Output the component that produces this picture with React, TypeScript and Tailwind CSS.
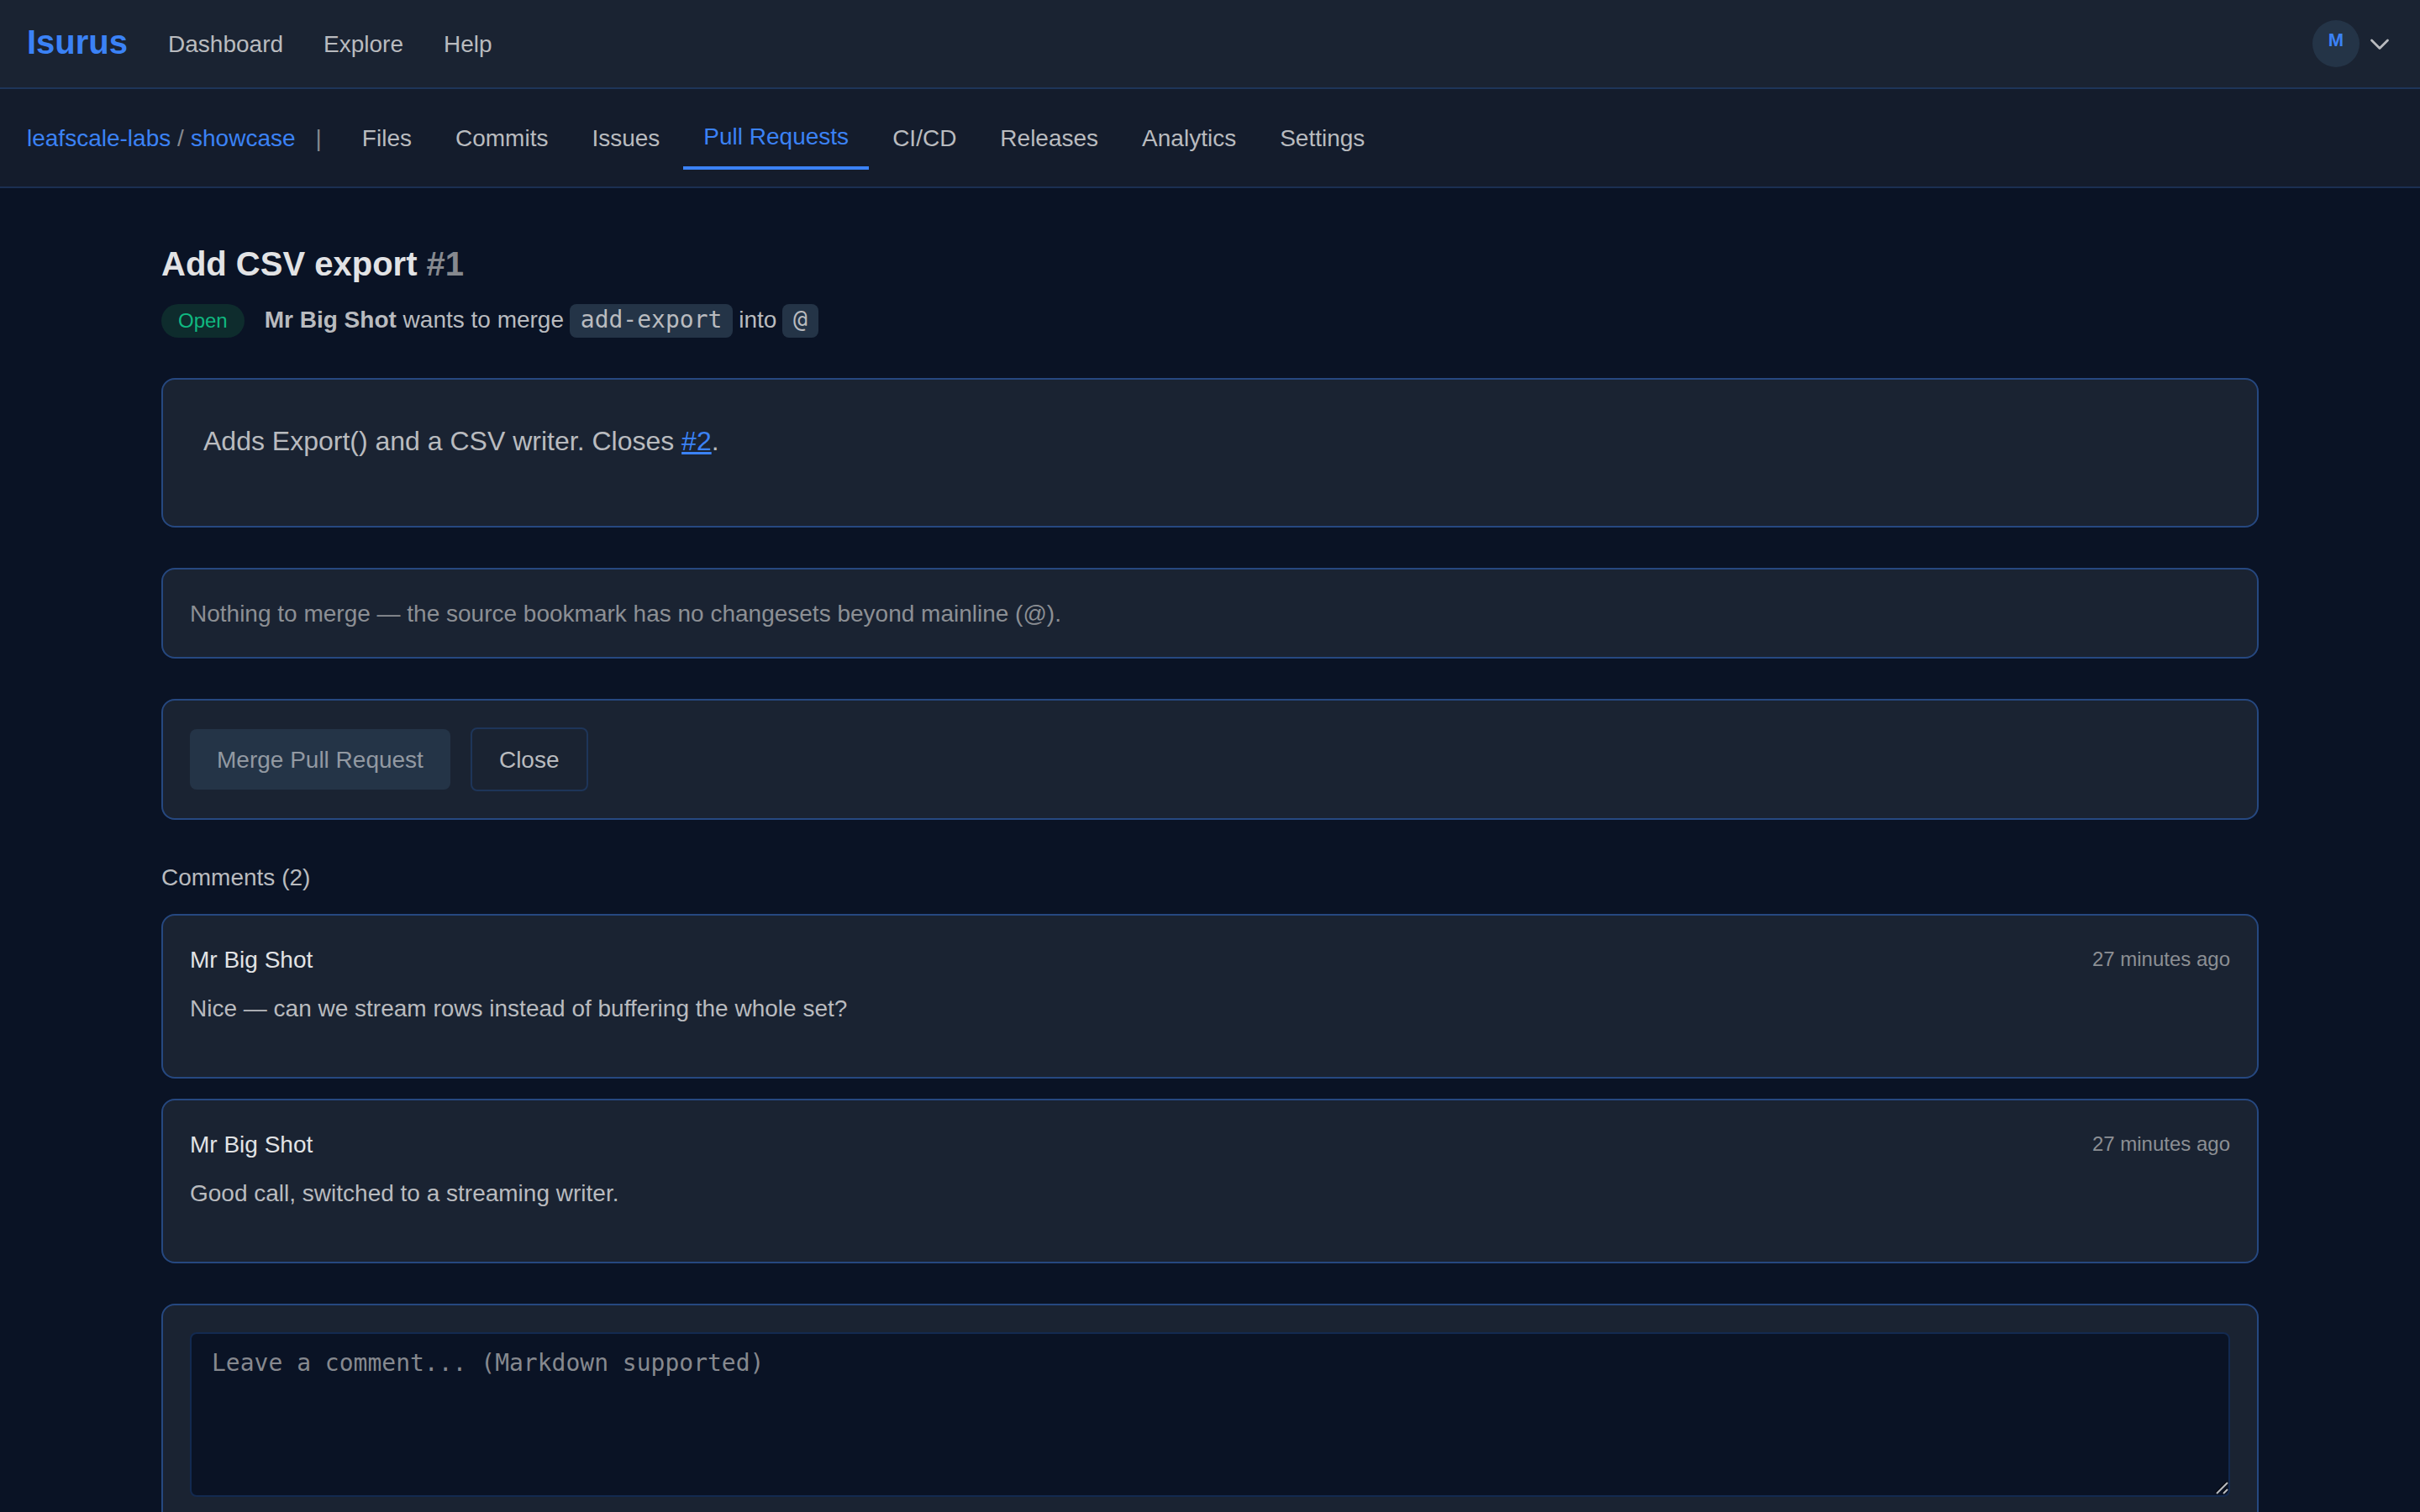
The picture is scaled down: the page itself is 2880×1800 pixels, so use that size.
import { useState } from "react";

const NAV_LINKS = [
  { label: "Dashboard", href: "#dashboard" },
  { label: "Explore", href: "#explore" },
  { label: "Help", href: "#help" },
];

const REPO_TABS = [
  "Files",
  "Commits",
  "Issues",
  "Pull Requests",
  "CI/CD",
  "Releases",
  "Analytics",
  "Settings",
];

const COMMENTS = [
  {
    id: 1,
    author: "Mr Big Shot",
    time: "27 minutes ago",
    body: "Nice — can we stream rows instead of buffering the whole set?",
  },
  {
    id: 2,
    author: "Mr Big Shot",
    time: "27 minutes ago",
    body: "Good call, switched to a streaming writer.",
  },
];

function TopBar() {
  return (
    <header className="flex h-[106px] items-center justify-between border-b-2 border-[#1e3559] bg-[#1a2332] pr-9 pl-8">
      <div className="flex items-center">
        <a href="#home" className="mr-12 pb-[5px] text-[40px] leading-[48px] font-bold text-[#3b82f6]">
          Isurus
        </a>
        <nav className="flex items-center gap-12 pt-0.5" aria-label="Main navigation">
          {NAV_LINKS.map((link) => (
            <a key={link.label} href={link.href} className="text-[#b9bbbf]">
              {link.label}
            </a>
          ))}
        </nav>
      </div>
      <button className="flex items-center gap-3" aria-label="User menu">
        <span className="flex size-14 justify-center rounded-full bg-[#243447] pt-[10px] text-[22px] leading-[28px] font-bold text-[#3b82f6]">
          M
        </span>
        <svg width="24" height="24" viewBox="0 0 24 24" fill="none">
          <path
            d="M2.5 8L12 17.5L21.5 8"
            stroke="#b9bbbf"
            strokeWidth="2.8"
            strokeLinecap="round"
            strokeLinejoin="round"
          />
        </svg>
      </button>
    </header>
  );
}

function RepoBar() {
  const [activeTab, setActiveTab] = useState("Pull Requests");

  return (
    <div className="flex h-[118px] items-center border-b-2 border-[#1b2f52] bg-[#141c2c] px-8">
      <div className="pt-0.5 text-[#86898f]">
        <a href="#owner" className="text-[#3b82f6]">leafscale-labs</a>
        {" / "}
        <a href="#repo" className="pl-[0.5px] text-[#3b82f6]">showcase</a>
      </div>
      <span className="mx-6 pt-0.5 text-[#86898f]">|</span>
      <nav className="flex items-center gap-1" aria-label="Repository">
        {REPO_TABS.map((tab) => (
          <button
            key={tab}
            onClick={() => setActiveTab(tab)}
            className={`px-6 pt-[21px] pb-[19px] leading-8 ${
              tab === activeTab
                ? "border-b-4 border-[#3b82f6] text-[#3b82f6]"
                : "text-[#b9bbbf]"
            }`}
          >
            {tab}
          </button>
        ))}
      </nav>
    </div>
  );
}

function Card({ className = "", children }: { className?: string; children: React.ReactNode }) {
  return (
    <section className={`rounded-2xl border-2 border-[#264880] bg-[#1a2332] ${className}`}>
      {children}
    </section>
  );
}

function Chip({ children }: { children: React.ReactNode }) {
  return (
    <code className="-mx-px rounded-lg bg-[#243447] px-[13px] pt-0.5 pb-[5px] font-['DejaVu_Sans_Mono',monospace] text-[28px]">
      {children}
    </code>
  );
}

export default function App() {
  const [comment, setComment] = useState("");

  return (
    <div className="h-[1800px] overflow-hidden bg-[#0a1325] font-['Liberation_Sans',Arial,sans-serif] text-[28px] leading-8 text-[#b9bbbf]">
      <TopBar />
      <RepoBar />

      <main className="px-48 pt-16">
        <h1 className="text-[40px] leading-[52px] font-bold text-[#e2e3e5]">
          Add CSV export <span className="text-[#86898f]">#1</span>
        </h1>
        <div className="mt-[22px] flex h-10 items-center gap-6">
          <span className="flex h-10 items-center rounded-full bg-[#0e2c2d] px-5 text-[24px] leading-7 text-[#10b981]">
            Open
          </span>
          <p className="pb-0.5">
            <strong>Mr Big Shot</strong> wants to merge <Chip>add-export</Chip> into <Chip>@</Chip>
          </p>
        </div>

        <Card className="mt-12 h-[178px] px-12 pt-[47px]">
          <p className="text-[32px] leading-[52px]">
            Adds Export() and a CSV writer. Closes{" "}
            <a href="#2" className="text-[#3b82f6] underline">#2</a>.
          </p>
        </Card>

        <Card className="mt-12 flex h-[108px] items-center px-8">
          <p className="pt-0.5 text-[#8c8f94]">
            Nothing to merge — the source bookmark has no changesets beyond mainline (@).
          </p>
        </Card>

        <Card className="mt-12 flex h-36 items-center gap-6 px-8">
          <button disabled className="h-[72px] rounded-lg bg-[#243447] px-8 pt-0.5 text-[#9299a2]">
            Merge Pull Request
          </button>
          <button className="h-[76px] rounded-lg border-2 border-[#1e3559] px-8 pt-0.5">Close</button>
        </Card>

        <h2 className="mt-[53px]">Comments (2)</h2>
        <div className="mt-[27px] flex flex-col gap-6">
          {COMMENTS.map((c) => (
            <Card key={c.id} className="h-[196px] px-8 pt-[37px]">
              <div className="flex items-center justify-between">
                <span className="text-[#e2e3e5]">{c.author}</span>
                <span className="pb-0.5 text-[24px] leading-7 text-[#8c8f94]">{c.time}</span>
              </div>
              <p className="mt-[26px]">{c.body}</p>
            </Card>
          ))}
        </div>

        <Card className="mt-12 h-[340px] p-8">
          <div className="relative">
            <textarea
              value={comment}
              onChange={(e) => setComment(e.target.value)}
              placeholder="Leave a comment... (Markdown supported)"
              className="block h-[196px] w-full resize-none rounded-lg border-2 border-[#132a50] bg-[#0a1325] px-6 pt-[18px] pb-4 font-['DejaVu_Sans_Mono',monospace] text-[28px] leading-[34px] outline-none placeholder:text-[#86898f]"
            />
            {/* Resize grip */}
            <svg className="absolute right-px bottom-0.5" width="18" height="18" viewBox="0 0 18 18" fill="none">
              <path d="M2 15L15 2M10 15L15 10" stroke="#050913" strokeWidth="2" />
              <path d="M3 16L16 3M11 16L16 11" stroke="#b9bbbf" strokeWidth="2" />
            </svg>
          </div>
        </Card>
      </main>
    </div>
  );
}
